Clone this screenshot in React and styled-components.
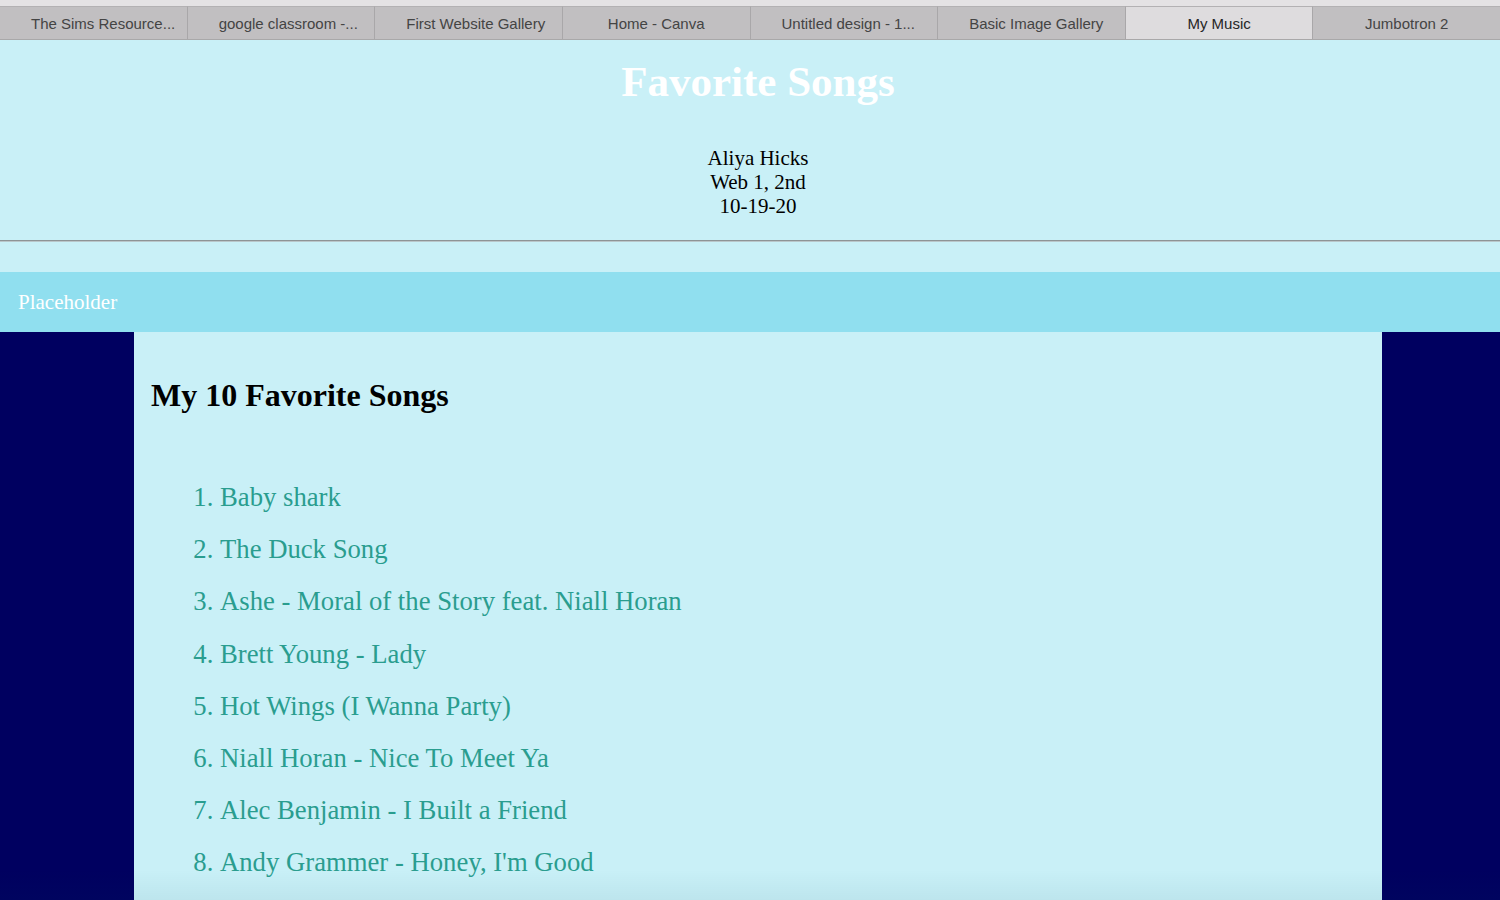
import React from "react";
import styled, { createGlobalStyle } from "styled-components";

const Global = createGlobalStyle`
  html, body { margin: 0; padding: 0; }
  body {
    background: #000060;
    font-family: "Liberation Serif", "Times New Roman", serif;
    overflow: hidden;
  }
`;

const TabBar = styled.div`
  display: flex;
  height: 40px;
  box-sizing: border-box;
  padding-top: 6px;
  background: #e4e2e4;
  border-bottom: 1px solid #a9a8a9;
`;

const Tab = styled.div`
  flex: 1;
  min-width: 0;
  display: flex;
  align-items: center;
  justify-content: safe center;
  padding: 0 31px;
  background: ${(p) => (p.$active ? "#dedcde" : "#c1bfc1")};
  border-top: 1px solid #b3b1b3;
  border-left: ${(p) => (p.$first ? "none" : "1px solid #a9a7a9")};
  font-family: "Liberation Sans", Arial, sans-serif;
  font-size: 15px;
  color: ${(p) => (p.$active ? "#262626" : "#444444")};
  white-space: nowrap;
  overflow: hidden;
`;

const Header = styled.header`
  background: #c9f0f7;
  padding: 17px 0 0 16px;
  text-align: center;
`;

const Title = styled.h1`
  margin: 0;
  color: #ffffff;
  font-size: 43px;
  line-height: 50px;
  font-weight: bold;
`;

const Byline = styled.p`
  margin: 39px 0 0;
  font-size: 21px;
  line-height: 24px;
  color: #000;
`;

const Rule = styled.hr`
  margin: 22px 0 0 -16px;
  border: none;
  border-top: 1px solid #8e9496;
  border-bottom: 1px solid #b9c7ca;
  height: 0;
`;

const Spacer = styled.div`
  height: 30px;
`;

const Nav = styled.nav`
  display: flex;
  align-items: center;
  height: 60px;
  padding-left: 18px;
  background: #90dfef;
  color: #ffffff;
  font-size: 21px;
`;

const Main = styled.main`
  display: flex;
  justify-content: center;
`;

const Panel = styled.section`
  width: 1248px;
  margin-left: 16px;
  box-sizing: border-box;
  background: #c9f0f7;
  padding: 44px 17px 30px;
`;

const SectionTitle = styled.h2`
  margin: 0;
  font-size: 32px;
  line-height: 38px;
  font-weight: bold;
  color: #000;
`;

const SongList = styled.ol`
  margin: 68px 0 0;
  padding-left: 69px;
  list-style: decimal;
  color: #2a9d8f;
  font-size: 26.7px;
`;

const Song = styled.li`
  line-height: 30px;
  margin-bottom: 22.2px;
  &::marker { color: #2a9d8f; }
`;

const BottomShade = styled.div`
  position: fixed;
  left: 0;
  right: 0;
  bottom: 0;
  height: 30px;
  pointer-events: none;
  background: linear-gradient(to bottom, rgba(0, 70, 90, 0), rgba(0, 70, 90, 0.06));
`;

const tabs = [
  "The Sims Resource...",
  "google classroom -...",
  "First Website Gallery",
  "Home - Canva",
  "Untitled design - 1...",
  "Basic Image Gallery",
  "My Music",
  "Jumbotron 2",
];

const songs = [
  "Baby shark",
  "The Duck Song",
  "Ashe - Moral of the Story feat. Niall Horan",
  "Brett Young - Lady",
  "Hot Wings (I Wanna Party)",
  "Niall Horan - Nice To Meet Ya",
  "Alec Benjamin - I Built a Friend",
  "Andy Grammer - Honey, I'm Good",
];

export default function App() {
  return (
    <>
      <Global />
      <TabBar>
        {tabs.map((t, i) => (
          <Tab key={t} $first={i === 0} $active={t === "My Music"}>
            {t}
          </Tab>
        ))}
      </TabBar>
      <Header>
        <Title>Favorite Songs</Title>
        <Byline>
          Aliya Hicks
          <br />
          Web 1, 2nd
          <br />
          10-19-20
        </Byline>
        <Rule />
        <Spacer />
      </Header>
      <Nav>Placeholder</Nav>
      <Main>
        <Panel>
          <SectionTitle>My 10 Favorite Songs</SectionTitle>
          <SongList>
            {songs.map((s) => (
              <Song key={s}>{s}</Song>
            ))}
          </SongList>
        </Panel>
      </Main>
      <BottomShade />
    </>
  );
}
